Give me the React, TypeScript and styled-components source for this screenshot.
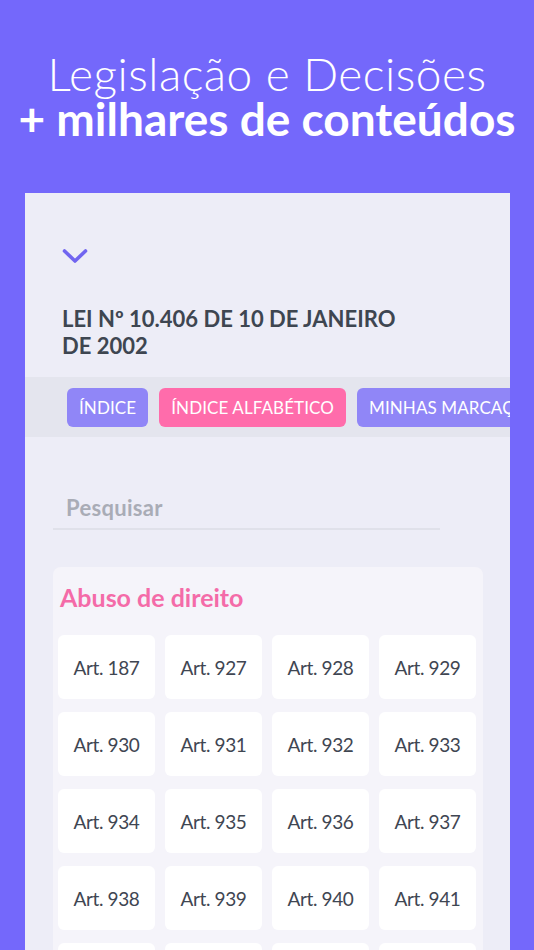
import React from 'react';
import styled, { createGlobalStyle } from 'styled-components';

const GlobalStyle = createGlobalStyle`
  html, body {
    margin: 0;
    padding: 0;
    background: #7468fb;
  }
  body {
    font-family: 'Lato', 'Open Sans', sans-serif;
    height: 950px;
    overflow: hidden;
  }
`;

const Page = styled.div`
  width: 534px;
  height: 950px;
  overflow: hidden;
`;

const Headline = styled.h1`
  margin: 0;
  padding-top: 51px;
  text-align: center;
  color: #ffffff;
  font-size: 46px;
  line-height: 45px;
  font-weight: 300;
  letter-spacing: 0.5px;
`;

const Strong = styled.span`
  display: block;
  font-weight: 700;
  letter-spacing: 0;
`;

const Screen = styled.div`
  margin: 52px 24px 0 25px;
  height: 757px;
  background: #ededf7;
  overflow: hidden;
`;

const TopArea = styled.div`
  padding: 55px 37px 18px;
`;

const Chevron = styled.svg`
  display: block;
  width: 26px;
  height: 16px;
`;

const LawTitle = styled.h2`
  margin: 41px 0 0;
  font-size: 22px;
  line-height: 27px;
  font-weight: 700;
  color: #3e4651;
`;

const TabBar = styled.div`
  height: 60px;
  background: #e4e5ee;
  display: flex;
  align-items: center;
  gap: 11px;
  padding-left: 42px;
  white-space: nowrap;
  overflow: hidden;
`;

const Tab = styled.div<{ $active?: boolean }>`
  flex: none;
  height: 39px;
  display: flex;
  align-items: center;
  padding: 0 12px;
  border-radius: 6px;
  background: ${({ $active }) => ($active ? '#ff6cab' : '#9086f7')};
  color: #ffffff;
  font-size: 17px;
  letter-spacing: 0.1px;
`;

const SearchWrap = styled.div`
  margin: 50px 70px 0 28px;
  height: 43px;
  border-bottom: 2px solid #e0e1ea;
  display: flex;
  align-items: center;
  padding-left: 13px;
  box-sizing: border-box;
`;

const SearchText = styled.span`
  color: #a9acb6;
  font-size: 22px;
  font-weight: 700;
  letter-spacing: 0.3px;
`;

const Card = styled.div`
  margin: 37px 27px 0 28px;
  background: #f5f4fa;
  border-radius: 8px;
  padding: 16px 6px 0 5px;
`;

const CardTitle = styled.h3`
  margin: 0 0 0 2px;
  color: #f46ba8;
  font-size: 25px;
  line-height: 28px;
  font-weight: 700;
`;

const Grid = styled.div`
  margin-top: 24px;
  display: grid;
  grid-template-columns: repeat(4, 97px);
  column-gap: 10px;
  row-gap: 13px;
`;

const Cell = styled.div`
  height: 64px;
  background: #ffffff;
  border-radius: 6px;
  display: flex;
  align-items: center;
  justify-content: center;
  color: #3f4652;
  font-size: 19px;
  letter-spacing: -0.4px;
`;

const articles = [
  187, 927, 928, 929, 930, 931, 932, 933, 934, 935, 936, 937, 938, 939, 940,
  941, 942, 943, 944, 945,
];

export default function App() {
  return (
    <>
      <GlobalStyle />
      <Page>
        <Headline>
          Legislação e Decisões
          <Strong>+ milhares de conteúdos</Strong>
        </Headline>
        <Screen>
          <TopArea>
            <Chevron viewBox="0 0 26 16" fill="none">
              <path
                d="M2.5 3 L13 13 L23.5 3"
                stroke="#7165f0"
                strokeWidth="3.6"
                strokeLinecap="round"
                strokeLinejoin="round"
              />
            </Chevron>
            <LawTitle>
              LEI Nº 10.406 DE 10 DE JANEIRO
              <br />
              DE 2002
            </LawTitle>
          </TopArea>
          <TabBar>
            <Tab>ÍNDICE</Tab>
            <Tab $active>ÍNDICE ALFABÉTICO</Tab>
            <Tab>MINHAS MARCAÇÕES</Tab>
          </TabBar>
          <SearchWrap>
            <SearchText>Pesquisar</SearchText>
          </SearchWrap>
          <Card>
            <CardTitle>Abuso de direito</CardTitle>
            <Grid>
              {articles.map((n) => (
                <Cell key={n}>Art. {n}</Cell>
              ))}
            </Grid>
          </Card>
        </Screen>
      </Page>
    </>
  );
}
